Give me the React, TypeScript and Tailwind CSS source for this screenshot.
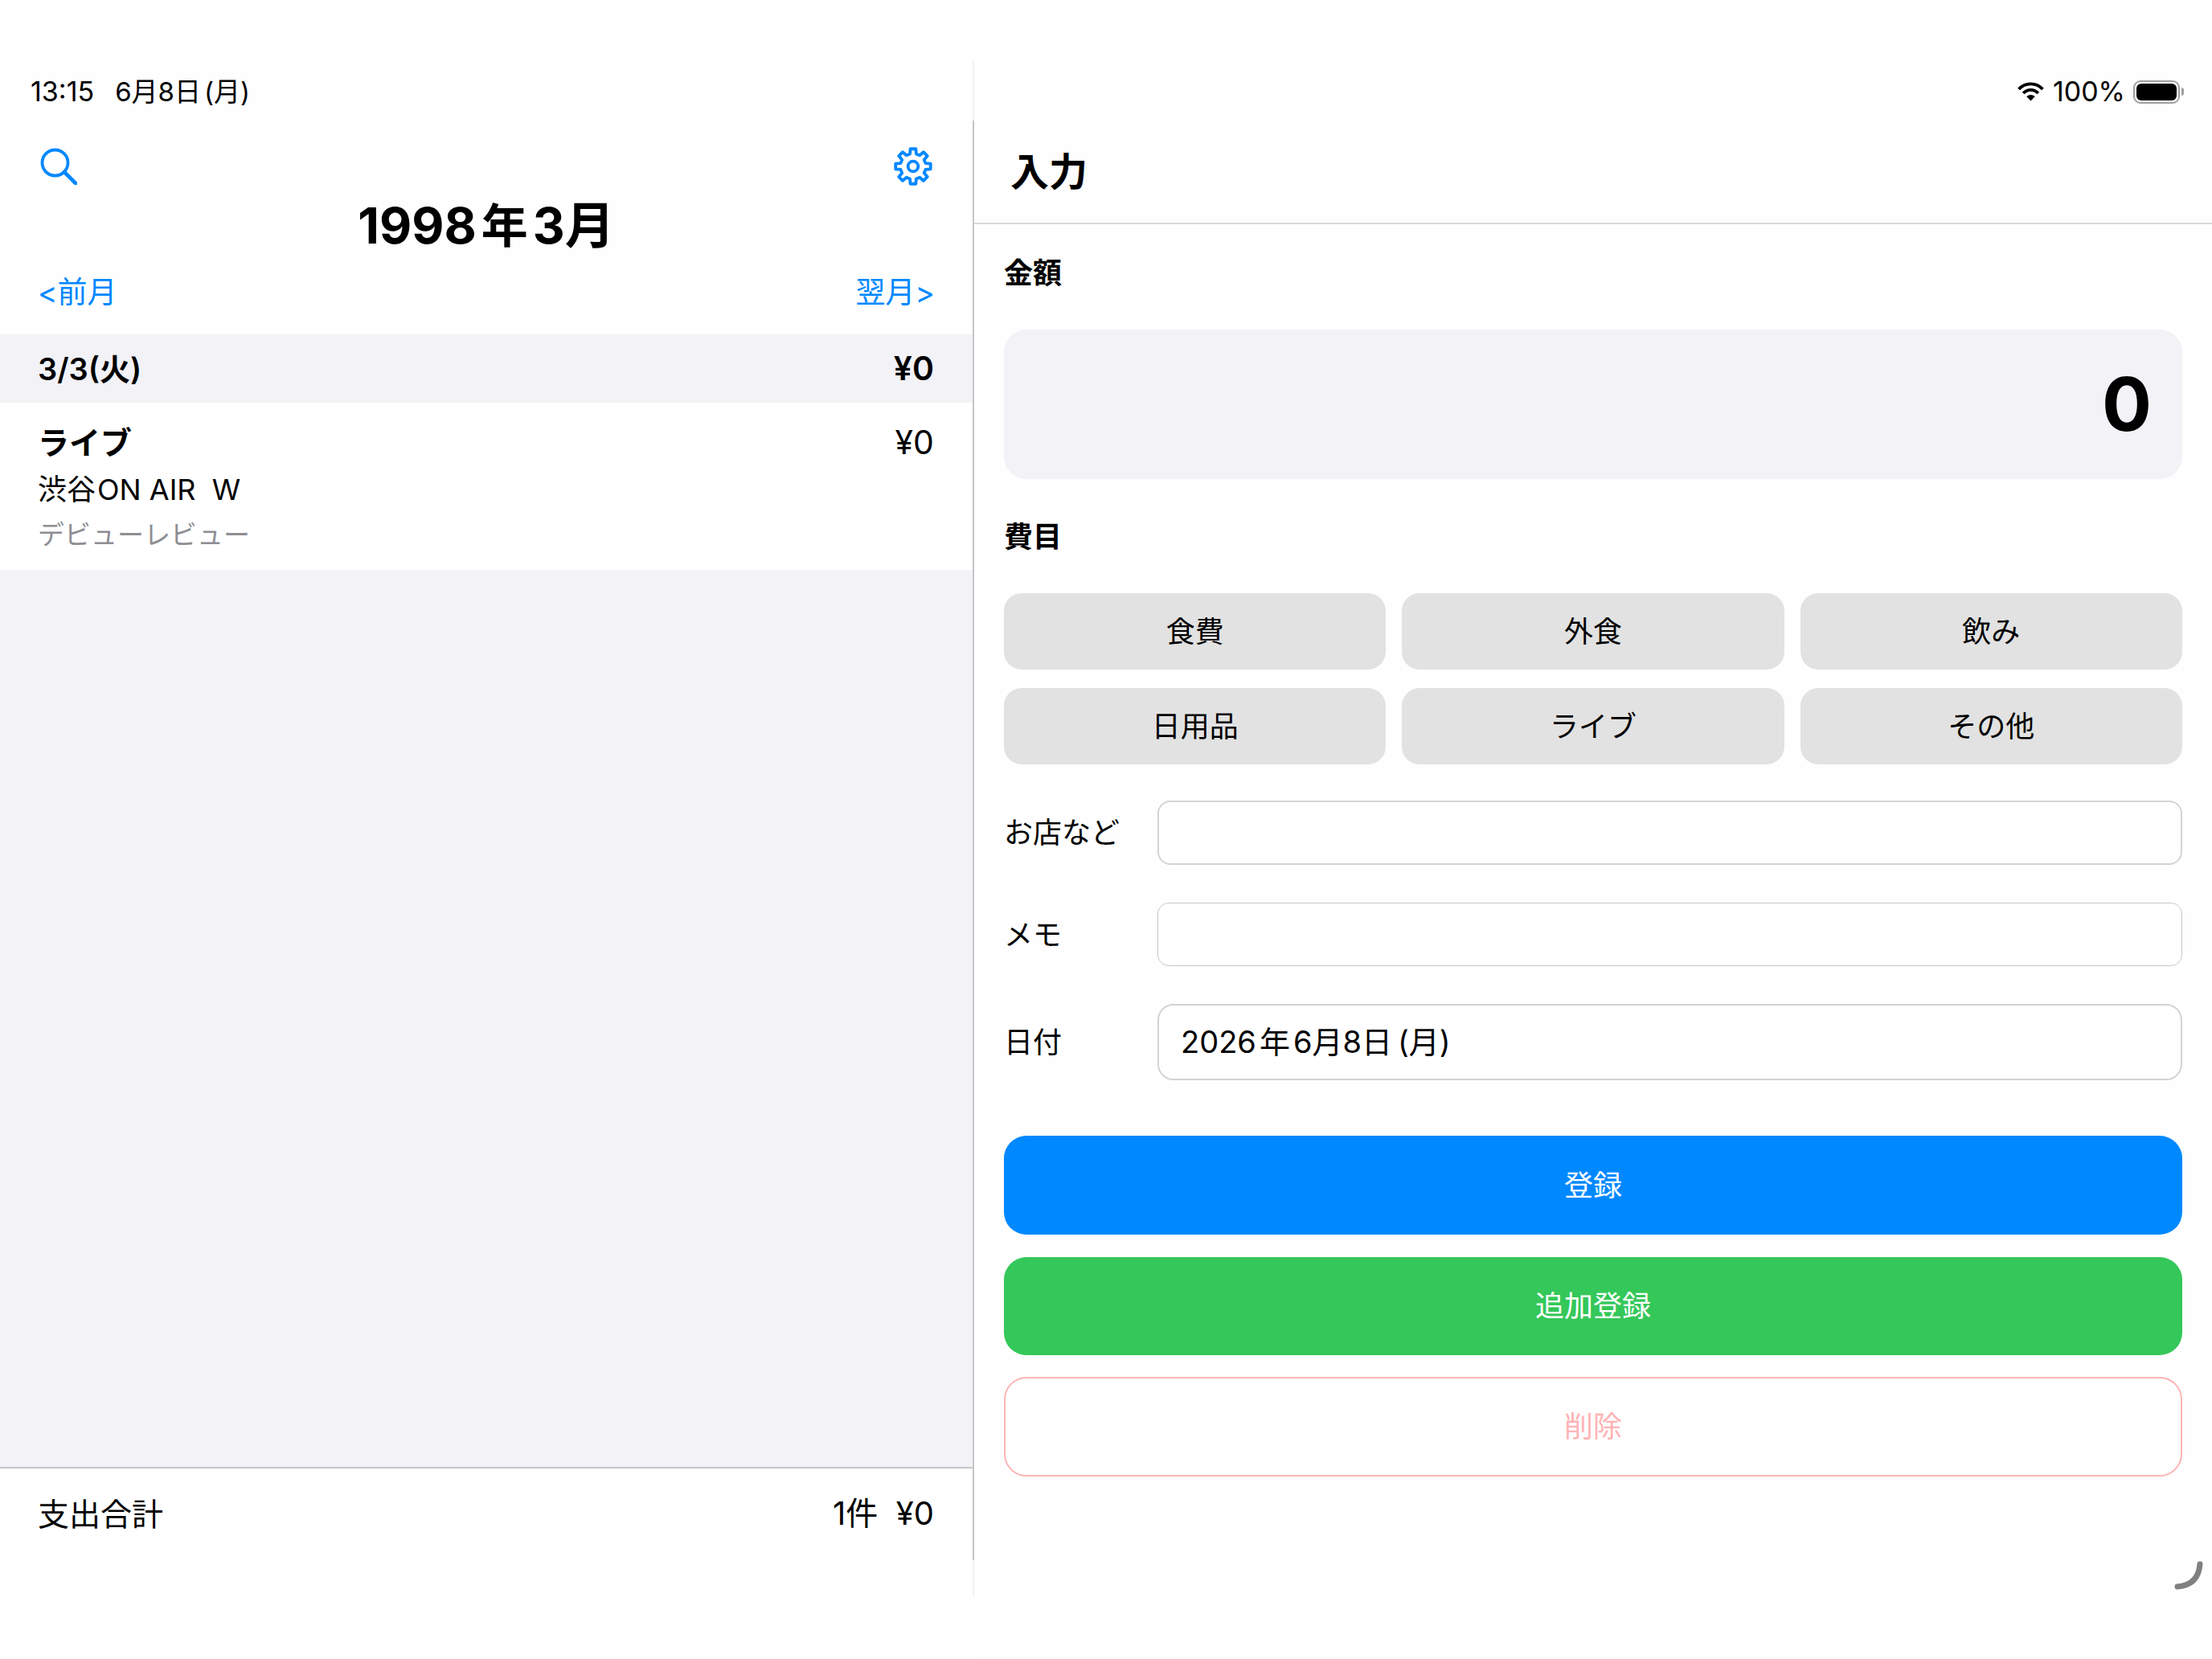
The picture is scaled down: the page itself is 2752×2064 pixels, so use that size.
const categories = ['食費', '外食', '飲み', '日用品', 'ライブ', 'その他'];

// eight-tooth outline, tooth pointing up first
const gearPath = Array.from({ length: 8 }, (_, i) => {
  const base = (i * Math.PI) / 4 - Math.PI / 2;
  const pt = (r: number, deg: number) => {
    const a = base + (deg * Math.PI) / 180;
    return `${(24 + r * Math.cos(a)).toFixed(2)} ${(24 + r * Math.sin(a)).toFixed(2)}`;
  };
  return `${i === 0 ? 'M' : 'L'}${pt(16, -14)} L${pt(22, -9)} L${pt(22, 9)} L${pt(16, 14)}`;
}).join(' ') + ' Z';

function GearGlyph() {
  return (
    <svg viewBox="0 0 48 48" className="w-[48px] h-[48px]" fill="none" stroke="#0088ff" strokeWidth="3.8" strokeLinejoin="round">
      <path d={gearPath} />
      <circle cx="24" cy="24" r="6.4" />
    </svg>
  );
}

function SearchGlyph() {
  return (
    <svg viewBox="0 0 46 46" className="w-[46px] h-[46px]" fill="none" stroke="#0088ff" strokeWidth="3.8" strokeLinecap="round">
      <circle cx="18.5" cy="18.5" r="16" />
      <path d="M30 30 L44 44" strokeWidth="4.6" />
    </svg>
  );
}

function WifiGlyph() {
  return (
    <svg viewBox="0 0 33 23" className="w-[33px] h-[24px]" fill="none" stroke="#000" strokeWidth="3.8">
      <path d="M1.6 8.6 A20 20 0 0 1 31.4 8.6" />
      <path d="M7.2 13.6 A12.5 12.5 0 0 1 25.8 13.6" />
      <path d="M16.5 23 L11.2 17.6 Q16.5 13.6 21.8 17.6 Z" fill="#000" stroke="none" />
    </svg>
  );
}

function BatteryGlyph() {
  return (
    <div className="flex items-center">
      <div className="w-[58px] h-[29px] rounded-[9px] border-2 border-[#a0a0a0] p-[2px]">
        <div className="w-full h-full rounded-[6px] bg-black" />
      </div>
      <div className="w-[3px] h-[10px] ml-[2px] rounded-r-full bg-[#a0a0a0]" />
    </div>
  );
}

function SectionLabel({ children }: { children: string }) {
  return <div className="h-[60px] pt-[2px] flex items-center text-[36px] font-bold">{children}</div>;
}

function FieldRow({ label, className, children }: { label: string; className: string; children?: React.ReactNode }) {
  return (
    <div className={`flex items-center ${className}`}>
      <div className="w-[191px] text-[36px]">{label}</div>
      <div className="flex-1 h-full flex items-center bg-white">{children}</div>
    </div>
  );
}

export default function App() {
  return (
    <div className="relative w-[2752px] h-[2064px] flex overflow-hidden bg-[#fefefe] text-black leading-none font-[family-name:Inter,'Noto_Sans_CJK_JP',sans-serif]">
      {/* left list */}
      <div className="w-[1210px] h-full flex flex-col">
        <div className="h-[152px] pt-[76px] pl-[38px] flex items-center text-[34px]">
          <span>13:15</span>
          <span className="ml-[26px] text-[33px]">6月8日<span className="ml-[4px]">(月)</span></span>
        </div>
        <div className="h-[70px] mt-[20px] pl-[50px] pr-[50px] flex items-center justify-between">
          <SearchGlyph />
          <GearGlyph />
        </div>
        <div className="h-[78px] flex items-center justify-center text-[62px] font-bold">
          1998<span className="mx-[6px] text-[58px]">年</span>3月
        </div>
        <div className="h-[88px] mb-[8px] pb-[2px] pl-[47px] pr-[47px] flex items-center justify-between text-[37px] text-[#0088ff]">
          <span>&lt;前月</span>
          <span>翌月&gt;</span>
        </div>
        <div className="h-[85px] pl-[47px] pr-[48px] bg-[#f2f2f7] flex items-center justify-between text-[38px] font-semibold">
          <span>3/3(火)</span>
          <span className="text-[41px]">¥0</span>
        </div>
        <div className="h-[208px] pl-[47px] pr-[48px] bg-white flex flex-col">
          <div className="h-[98px] flex items-center justify-between text-[39px]">
            <span className="font-bold">ライブ</span>
            <span className="text-[41px]">¥0</span>
          </div>
          <div className="h-[20px] flex items-center text-[36px]">
            渋谷<span className="ml-[2px]">ON AIR&nbsp;&nbsp;W</span>
          </div>
          <div className="mt-[30px] text-[33px] text-[#8e8e93]">デビューレビュー</div>
        </div>
        <div className="flex-1 bg-[#f2f2f7]" />
        <div className="h-[239px] bg-white border-t-2 border-[#c6c6c8]">
          <div className="h-[112px] pl-[47px] pr-[48px] flex items-center justify-between text-[39px]">
            <span>支出合計</span>
            <span className="text-[40px]">1件&nbsp;&nbsp;¥0</span>
          </div>
        </div>
      </div>

      {/* pane divider */}
      <div className="w-[2px] pt-[76px] flex flex-col">
        <div className="h-[74px] bg-[#f2f2f2]" />
        <div className="h-[1791px] bg-[#c6c6c8]" />
        <div className="h-[46px] bg-[#f2f2f2]" />
      </div>

      {/* right form */}
      <div className="flex-1 h-full flex flex-col">
        <div className="h-[152px] pt-[76px] pr-[35px] flex items-center justify-end">
          <WifiGlyph />
          <span className="ml-[11px] mr-[10px] text-[34px]">100%</span>
          <BatteryGlyph />
        </div>
        <div className="h-[127px] pl-[45px] pb-[2px] flex items-center border-b-2 border-[#d9d9d9] text-[48px] font-semibold">入力</div>
        <div className="pl-[37px] pr-[37px] pt-[30px] flex flex-col">
          <SectionLabel>金額</SectionLabel>
          <div className="mt-[41px] h-[186px] pr-[38px] rounded-[28px] bg-[#f2f2f7] flex items-center justify-end text-[92px] font-bold">0</div>
          <div className="mt-[41px]">
            <SectionLabel>費目</SectionLabel>
          </div>
          <div className="mt-[41px] grid grid-cols-3 gap-x-[20px] gap-y-[23px]">
            {categories.map((c) => (
              <div key={c} className="h-[95px] rounded-[22px] bg-[#e2e2e2] flex items-center justify-center text-[36px]">
                {c}
              </div>
            ))}
          </div>
          <FieldRow label="お店など" className="mt-[45px] h-[80px]">
            <div className="w-full h-full rounded-[16px] border-2 border-[#d4d4d6]" />
          </FieldRow>
          <FieldRow label="メモ" className="mt-[47px] h-[79px]">
            <div className="w-full h-full rounded-[14px] border border-[#c8c8cc]" />
          </FieldRow>
          <FieldRow label="日付" className="mt-[47px] h-[95px]">
            <div className="w-full h-full pl-[27px] pb-[2px] rounded-[20px] border-2 border-[#d4d4d6] flex items-center text-[38px]">
              2026<span className="mx-[4px]">年</span>6月8日<span className="ml-[7px]">(月)</span>
            </div>
          </FieldRow>
          <div className="mt-[69px] h-[123px] rounded-[28px] bg-[#0088ff] text-white flex items-center justify-center text-[36px]">登録</div>
          <div className="mt-[28px] h-[122px] rounded-[28px] bg-[#34c759] text-white flex items-center justify-center text-[36px]">追加登録</div>
          <div className="mt-[27px] h-[124px] rounded-[28px] border-2 border-[#ffb3b5] text-[#ffb3b5] flex items-center justify-center text-[36px]">削除</div>
        </div>
      </div>

      {/* corner indicator */}
      <svg viewBox="0 0 40 40" className="absolute left-[2704px] top-[1941px] w-[40px] h-[40px]" fill="none" stroke="#808080" strokeWidth="7" strokeLinecap="round">
        <path d="M33 5 Q31 31 5 33" />
      </svg>
    </div>
  );
}
